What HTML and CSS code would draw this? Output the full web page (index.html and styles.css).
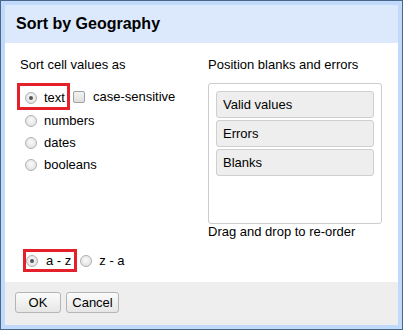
FILE: index.html
```html
<!DOCTYPE html>
<html>
<head>
    <title>Sort by Geography</title>
    <link rel="stylesheet" href="styles.css">
</head>
<body>
<div class="frame">
    <div class="dialog">
        <div class="header">Sort by Geography</div>
        <div class="body">
            <div class="col-left">
                <div class="caption">Sort cell values as</div>
                <div class="row first">
                    <span class="mark">
                        <span class="radio checked"></span>
                        <span class="label">text</span>
                    </span>
                    <span class="checkbox"></span>
                    <span class="label">case-sensitive</span>
                </div>
                <div class="row"><span class="radio"></span><span class="label">numbers</span></div>
                <div class="row"><span class="radio"></span><span class="label">dates</span></div>
                <div class="row"><span class="radio"></span><span class="label">booleans</span></div>
            </div>
            <div class="col-right">
                <div class="caption">Position blanks and errors</div>
                <div class="order-box">
                    <div class="item">Valid values</div>
                    <div class="item">Errors</div>
                    <div class="item">Blanks</div>
                </div>
                <div class="hint">Drag and drop to re-order</div>
            </div>
            <div class="direction">
                <span class="mark mark-dir">
                    <span class="radio checked"></span>
                    <span class="label">a - z</span>
                </span>
                <span class="radio"></span>
                <span class="label">z - a</span>
            </div>
        </div>
        <div class="footer">
            <button class="btn btn-ok">OK</button>
            <button class="btn btn-cancel">Cancel</button>
        </div>
    </div>
</div>
</body>
</html>
```

FILE: styles.css
```css
body {
    margin: 0;
    font-family: Arial, "Liberation Sans", sans-serif;
    font-size: 13px;
    color: #000;
}
.frame {
    width: 403px;
    height: 330px;
    box-sizing: border-box;
    border: 1px solid #48678b;
    padding: 4px;
    background: #c1d9fa;
}
.dialog {
    height: 100%;
    display: flex;
    flex-direction: column;
    background: #fff;
}
.header {
    height: 38px;
    line-height: 37px;
    padding-left: 11px;
    background: #dce9fd;
    font-size: 16px;
    font-weight: bold;
}
.body {
    flex: 1;
    display: grid;
    grid-template-columns: 188px 174px;
    grid-template-rows: auto 1fr;
    padding: 14px 0 0 15px;
    line-height: 16px;
}
.caption {
    margin-bottom: 10px;
}
.row {
    display: flex;
    align-items: center;
    height: 22px;
}
.row.first {
    height: 27px;
    padding-top: 1px;
    box-sizing: border-box;
}
.mark {
    display: flex;
    align-items: center;
    box-sizing: border-box;
    height: 27px;
    margin-left: -3px;
    padding: 1px 2px 0 0;
    border: 3px solid #e4202a;
}
.row.first .mark {
    margin-top: -1px;
    padding-top: 2px;
}
.mark .radio {
    margin-left: 5px;
}
.radio {
    width: 10px;
    height: 10px;
    margin-left: 5px;
    border: 1px solid #b0b0b0;
    border-radius: 50%;
    background: radial-gradient(circle at 50% 40%, #fafafa, #dcdcdc);
    flex-shrink: 0;
    position: relative;
}
.radio.checked::after {
    content: "";
    position: absolute;
    left: 3px;
    top: 3px;
    width: 4px;
    height: 4px;
    border-radius: 50%;
    background: #555;
}
.label {
    margin-left: 7px;
}
.checkbox {
    width: 10px;
    height: 10px;
    margin-left: 3px;
    border: 1px solid #a0a0a0;
    border-radius: 2px;
    background: linear-gradient(#f4f4f4, #dedede);
}
.checkbox + .label {
    margin-left: 8px;
}
.order-box {
    height: 141px;
    box-sizing: border-box;
    padding: 7px;
    border: 1px solid #ccc;
    border-radius: 3px;
    display: flex;
    flex-direction: column;
    gap: 2px;
}
.item {
    height: 27px;
    box-sizing: border-box;
    line-height: 25px;
    padding-left: 6px;
    border: 1px solid #cfcfcf;
    border-radius: 3px;
    background: #eee;
}
.direction {
    grid-column: 1 / 3;
    display: flex;
    align-items: center;
    margin-top: 9px;
    align-self: start;
}
.mark-dir {
    height: 23px;
    margin-left: 3px;
    padding: 0 3px 0 0;
}
.mark-dir .radio {
    margin-left: 0;
}
.mark-dir .label {
    margin-left: 8px;
}
.mark-dir + .radio {
    margin-left: 3px;
}
.direction > .label {
    margin-left: 7px;
}
.footer {
    height: 43px;
    box-sizing: border-box;
    padding: 10px 10px;
    background: #eee;
    display: flex;
    gap: 5px;
    align-items: flex-start;
}
.btn {
    height: 21px;
    padding: 0;
    font-family: Arial, "Liberation Sans", sans-serif;
    font-size: 13px;
    color: #000;
    border: 1px solid #b5b5b5;
    border-radius: 3px;
    background: linear-gradient(#fbfbfb, #e6e6e6);
}
.btn-ok {
    width: 46px;
}
.btn-cancel {
    width: 53px;
}
```
